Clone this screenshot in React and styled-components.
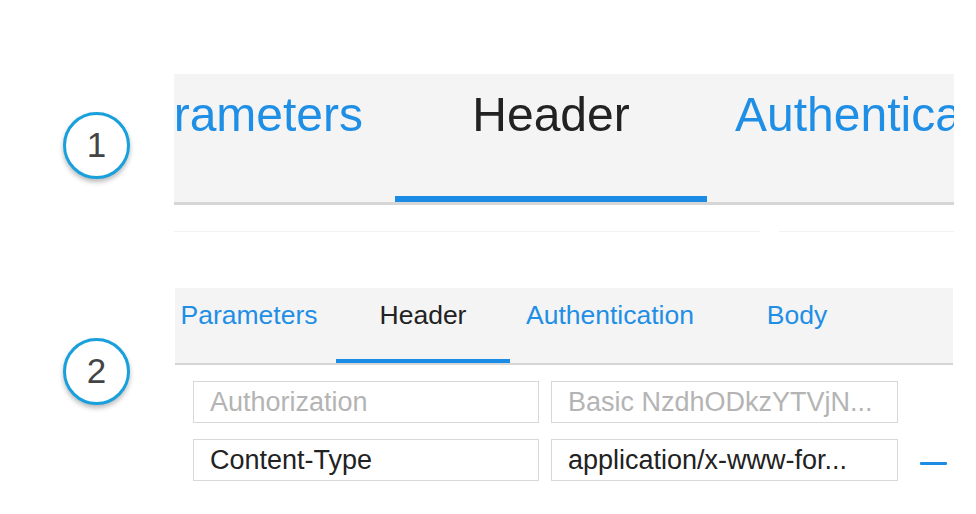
import React from "react";
import styled, { createGlobalStyle } from "styled-components";

const GlobalStyle = createGlobalStyle`
  html, body {
    margin: 0;
    padding: 0;
    background: #ffffff;
  }
  body {
    font-family: "Liberation Sans", Arial, Helvetica, sans-serif;
  }
`;

const tabs = ["Parameters", "Header", "Authentication", "Body"];

function App() {
  return (
    <>
      <GlobalStyle />
      <Page>
        <Section $top={74}>
          <BadgeCol>
            <Badge $offset={38}>1</Badge>
          </BadgeCol>
          <div>
            <Panel>
              <TabStrip $shift={-91} $blur>
                {tabs.map((t) => (
                  <Tab key={t} $active={t === "Header"} $big>
                    {t}
                  </Tab>
                ))}
              </TabStrip>
            </Panel>
            <Ghost>
              <span />
              <span />
            </Ghost>
          </div>
        </Section>

        <Section $top={56}>
          <BadgeCol>
            <Badge $offset={50}>2</Badge>
          </BadgeCol>
          <div>
            <Panel $nudge>
              <TabStrip $shift={-13}>
                {tabs.map((t) => (
                  <Tab key={t} $active={t === "Header"}>
                    {t}
                  </Tab>
                ))}
              </TabStrip>
            </Panel>
            <Rows>
              <Row>
                <Field $placeholder>Authorization</Field>
                <Field $placeholder $wide>
                  Basic NzdhODkzYTVjN...
                </Field>
              </Row>
              <Row>
                <Field>Content-Type</Field>
                <Field $wide>application/x-www-for...</Field>
                <Remove />
              </Row>
            </Rows>
          </div>
        </Section>
      </Page>
    </>
  );
}

const Page = styled.div`
  width: 976px;
  height: 514px;
  overflow: hidden;
`;

const Section = styled.div`
  display: flex;
  align-items: flex-start;
  padding-top: ${(p) => p.$top}px;
`;

const BadgeCol = styled.div`
  width: 174px;
  flex-shrink: 0;
  padding-left: 63px;
  box-sizing: border-box;
`;

const Badge = styled.div`
  width: 67px;
  height: 67px;
  margin-top: ${(p) => p.$offset}px;
  box-sizing: border-box;
  border: 3.5px solid #18a0dc;
  border-radius: 50%;
  background: #fff;
  box-shadow: 0 3px 5px rgba(0, 0, 0, 0.28);
  display: flex;
  align-items: center;
  justify-content: center;
  font-size: 35px;
  color: #444;
  padding-bottom: 1px;
`;

const Panel = styled.div`
  width: ${(p) => (p.$nudge ? 778 : 780)}px;
  margin-left: ${(p) => (p.$nudge ? 1 : 0)}px;
  overflow: hidden;
  background: #f4f4f4;
  border-bottom: ${(p) => (p.$nudge ? 2 : 3)}px solid #d6d6d6;
`;

const TabStrip = styled.div`
  display: flex;
  margin-left: ${(p) => p.$shift}px;
  filter: ${(p) => (p.$blur ? "blur(0.6px)" : "none")};
`;

const Tab = styled.div`
  flex-shrink: 0;
  box-sizing: border-box;
  min-width: ${(p) => (p.$big ? 312 : 174)}px;
  padding: ${(p) => (p.$big ? "17px 28px 0" : "14px 16px 0")};
  height: ${(p) => (p.$big ? 128 : 75)}px;
  text-align: center;
  white-space: nowrap;
  font-size: ${(p) => (p.$big ? 48 : 26.5)}px;
  line-height: ${(p) => (p.$big ? 48 : 26.5)}px;
  color: ${(p) => (p.$active ? "#222" : "#1f8fe6")};
  border-bottom: ${(p) => (p.$big ? 6 : 4)}px solid
    ${(p) => (p.$active ? "#1a8ce6" : "transparent")};
`;

const Ghost = styled.div`
  display: flex;
  gap: 19px;
  margin-top: 26px;

  span {
    height: 1px;
    background: #f2f2f2;
  }
  span:first-child {
    width: 586px;
  }
  span:last-child {
    width: 175px;
  }
`;

const Rows = styled.div`
  display: flex;
  flex-direction: column;
  gap: 16px;
  padding: 16px 0 0 19px;
`;

const Row = styled.div`
  display: flex;
  align-items: center;
  gap: 12px;
`;

const Field = styled.div`
  box-sizing: border-box;
  width: ${(p) => (p.$wide ? 347 : 346)}px;
  height: 42px;
  border: 1px solid #d8d8d8;
  padding: 1px 16px 0;
  display: flex;
  align-items: center;
  white-space: nowrap;
  overflow: hidden;
  font-size: 27px;
  color: ${(p) => (p.$placeholder ? "#b4b4b4" : "#222")};
`;

const Remove = styled.span`
  width: 27px;
  height: 3px;
  margin-left: 10px;
  margin-top: 6px;
  background: #1a8ce6;
  border-radius: 1px;
`;

export default App;
